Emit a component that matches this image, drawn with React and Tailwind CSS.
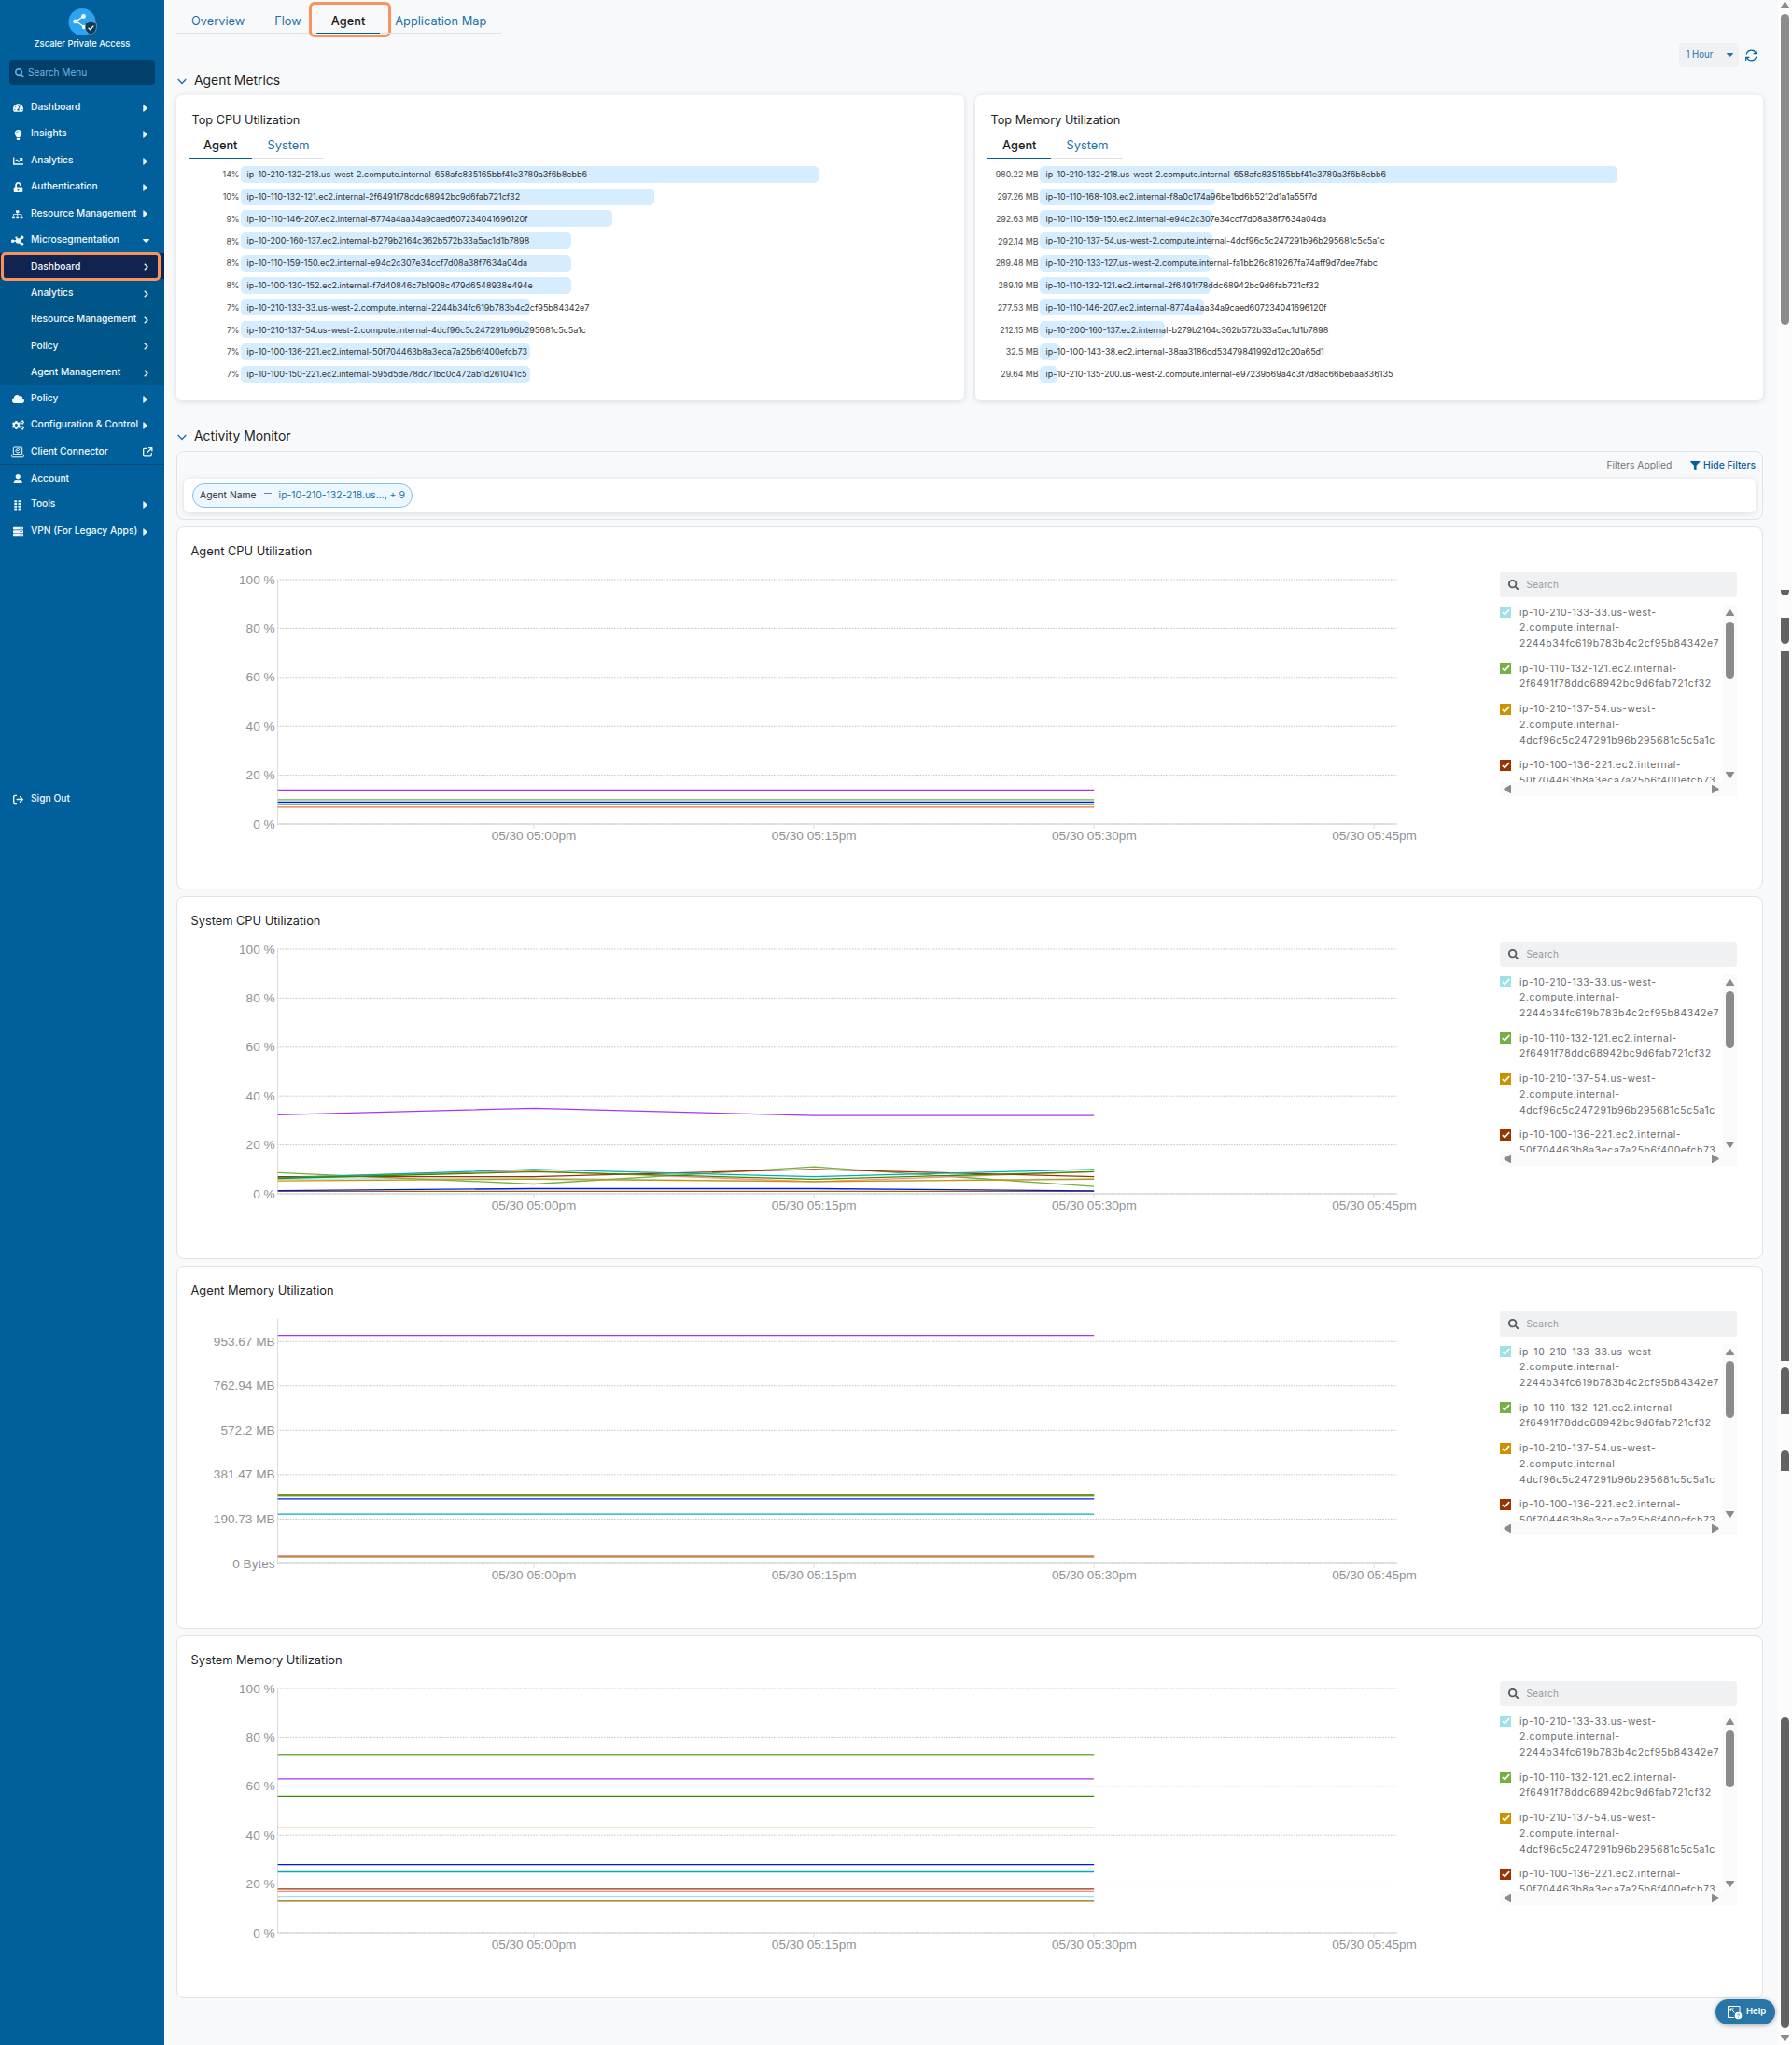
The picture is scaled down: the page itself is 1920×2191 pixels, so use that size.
import { useState } from 'react'
import { FaTachometerAlt, FaLightbulb, FaChartLine, FaUnlockAlt, FaSitemap, FaCloud, FaCogs, FaUser, FaServer, FaSearch, FaFilter } from 'react-icons/fa'
import { FaArrowRightFromBracket, FaArrowUpRightFromSquare } from 'react-icons/fa6'


const cpuAgents = [
  { label: '14%', value: 14, name: 'ip-10-210-132-218.us-west-2.compute.internal-658afc835165bbf41e3789a3f6b8ebb6' },
  { label: '10%', value: 10, name: 'ip-10-110-132-121.ec2.internal-2f6491f78ddc68942bc9d6fab721cf32' },
  { label: '9%', value: 9, name: 'ip-10-110-146-207.ec2.internal-8774a4aa34a9caed607234041696120f' },
  { label: '8%', value: 8, name: 'ip-10-200-160-137.ec2.internal-b279b2164c362b572b33a5ac1d1b7898' },
  { label: '8%', value: 8, name: 'ip-10-110-159-150.ec2.internal-e94c2c307e34ccf7d08a38f7634a04da' },
  { label: '8%', value: 8, name: 'ip-10-100-130-152.ec2.internal-f7d40846c7b1908c479d6548938e494e' },
  { label: '7%', value: 7, name: 'ip-10-210-133-33.us-west-2.compute.internal-2244b34fc619b783b4c2cf95b84342e7' },
  { label: '7%', value: 7, name: 'ip-10-210-137-54.us-west-2.compute.internal-4dcf96c5c247291b96b295681c5c5a1c' },
  { label: '7%', value: 7, name: 'ip-10-100-136-221.ec2.internal-50f704463b8a3eca7a25b6f400efcb73' },
  { label: '7%', value: 7, name: 'ip-10-100-150-221.ec2.internal-595d5de78dc71bc0c472ab1d261041c5' },
]

const memoryAgents = [
  { label: '980.22 MB', value: 980.22, name: 'ip-10-210-132-218.us-west-2.compute.internal-658afc835165bbf41e3789a3f6b8ebb6' },
  { label: '297.26 MB', value: 297.26, name: 'ip-10-110-168-108.ec2.internal-f8a0c174a96be1bd6b5212d1a1a55f7d' },
  { label: '292.63 MB', value: 292.63, name: 'ip-10-110-159-150.ec2.internal-e94c2c307e34ccf7d08a38f7634a04da' },
  { label: '292.14 MB', value: 292.14, name: 'ip-10-210-137-54.us-west-2.compute.internal-4dcf96c5c247291b96b295681c5c5a1c' },
  { label: '289.48 MB', value: 289.48, name: 'ip-10-210-133-127.us-west-2.compute.internal-fa1bb26c819267fa74aff9d7dee7fabc' },
  { label: '289.19 MB', value: 289.19, name: 'ip-10-110-132-121.ec2.internal-2f6491f78ddc68942bc9d6fab721cf32' },
  { label: '277.53 MB', value: 277.53, name: 'ip-10-110-146-207.ec2.internal-8774a4aa34a9caed607234041696120f' },
  { label: '212.15 MB', value: 212.15, name: 'ip-10-200-160-137.ec2.internal-b279b2164c362b572b33a5ac1d1b7898' },
  { label: '32.5 MB', value: 32.5, name: 'ip-10-100-143-38.ec2.internal-38aa3186cd53479841992d12c20a65d1' },
  { label: '29.64 MB', value: 29.64, name: 'ip-10-210-135-200.us-west-2.compute.internal-e97239b69a4c3f7d8ac66bebaa836135' },
]

const legend = [
  { color: '#a0e1e8', lines: ['ip-10-210-133-33.us-west-', '2.compute.internal-', '2244b34fc619b783b4c2cf95b84342e7'] },
  { color: '#74b043', lines: ['ip-10-110-132-121.ec2.internal-', '2f6491f78ddc68942bc9d6fab721cf32'] },
  { color: '#cc9200', lines: ['ip-10-210-137-54.us-west-', '2.compute.internal-', '4dcf96c5c247291b96b295681c5c5a1c'] },
  { color: '#993300', lines: ['ip-10-100-136-221.ec2.internal-', '50f704463b8a3eca7a25b6f400efcb73'] },
]

const percentTicks = [100, 80, 60, 40, 20, 0].map(v => ({ value: v, label: v + ' %' }))
const memoryTicks = ['953.67 MB', '762.94 MB', '572.2 MB', '381.47 MB', '190.73 MB', '0 Bytes'].map((label, i) => ({ value: (5 - i) * 190.735, label }))
const flat = v => [v, v, v, v]

const charts = [
  {
    title: 'Agent CPU Utilization', ticks: percentTicks, max: 100,
    series: [
      { color: '#a0e1e8', data: flat(8.4) },
      { color: '#74b043', data: flat(10) },
      { color: '#0018f0', data: flat(9) },
      { color: '#7f7a10', data: flat(8) },
      { color: '#993300', data: flat(7) },
      { color: '#ff8c80', data: flat(7) },
      { color: '#a933ff', data: flat(14) },
    ]
  },
  {
    title: 'System CPU Utilization', ticks: percentTicks, max: 100,
    series: [
      { color: '#a0e1e8', data: [6, 6.4, 5, 6.2] },
      { color: '#74b043', data: [8.6, 4, 11, 3] },
      { color: '#ff8c80', data: [6.8, 9.3, 5, 9] },
      { color: '#993300', data: [7, 7, 10, 7] },
      { color: '#cc9200', data: [5.3, 6, 5, 6] },
      { color: '#00adb5', data: [6.5, 10, 7, 10] },
      { color: '#3c8a00', data: [6.3, 9, 6, 9] },
      { color: '#996600', data: flat(1) },
      { color: '#0018f0', data: [1.3, 2.1, 2.1, 1.2] },
      { color: '#a933ff', data: [32.3, 35, 32, 32] },
    ]
  },
  {
    title: 'Agent Memory Utilization', ticks: memoryTicks, max: 1051,
    series: [
      { color: '#74b043', data: flat(289.19) },
      { color: '#cc9200', data: flat(292.14) },
      { color: '#3c8a00', data: flat(293) },
      { color: '#0018f0', data: flat(277.53) },
      { color: '#00adb5', data: flat(212.15) },
      { color: '#e59a90', data: flat(33) },
      { color: '#b06a10', data: flat(28.5) },
      { color: '#a933ff', data: flat(980.22) },
    ]
  },
  {
    title: 'System Memory Utilization', ticks: percentTicks, max: 100,
    series: [
      { color: '#74b043', data: flat(73) },
      { color: '#a933ff', data: flat(63) },
      { color: '#3c8a00', data: flat(56) },
      { color: '#cc9200', data: flat(43) },
      { color: '#0018f0', data: flat(28) },
      { color: '#00adb5', data: flat(25) },
      { color: '#993300', data: flat(18) },
      { color: '#ff8c80', data: flat(17) },
      { color: '#a0e1e8', data: flat(15) },
      { color: '#996600', data: flat(13) },
    ]
  },
]

function NodesIcon() {
  return (
    <svg width="14" height="12" viewBox="0 0 14 12" fill="currentColor" stroke="currentColor" strokeWidth="1.3">
      <path d="M2 6h4.5M7 6l4-3.4M7 6l4 3.6M5.8 3.2L7.5 6" fill="none" />
      <circle cx="1.7" cy="6.2" r="1.1" />
      <circle cx="7.4" cy="6" r="2" />
      <circle cx="11.6" cy="2.3" r="1.2" />
      <circle cx="11.6" cy="9.7" r="1.2" />
      <circle cx="5.4" cy="2.6" r=".5" />
    </svg>
  )
}

function LaptopIcon() {
  return (
    <svg width="14" height="13" viewBox="0 0 14 13" fill="none" stroke="currentColor" strokeWidth="1">
      <rect x="2.3" y="1" width="9.4" height="7.6" rx=".8" />
      <path d="M.7 9.2h12.6v1.9c0 .4-.3.7-.7.7H1.4c-.4 0-.7-.3-.7-.7z" />
      <path d="M9 3.6a2.2 2.2 0 1 0 .2 2M9.3 2.8l-2.2 2.2-1-.9" />
    </svg>
  )
}

function DotsIcon() {
  return (
    <svg width="8" height="11" viewBox="0 0 8 11" fill="currentColor">
      {[0.3, 3.05, 5.8, 8.55].map(y => [0.3, 4.5].map(x => <rect key={x + '-' + y} x={x} y={y} width="2.8" height="2" rx=".5" />))}
    </svg>
  )
}

const menu = [
  { name: 'Dashboard', icon: <FaTachometerAlt size={11} />, arrow: 'right' },
  { name: 'Insights', icon: <FaLightbulb size={11} />, arrow: 'right' },
  { name: 'Analytics', icon: <FaChartLine size={11} />, arrow: 'right' },
  { name: 'Authentication', icon: <FaUnlockAlt size={11} />, arrow: 'right' },
  { name: 'Resource Management', icon: <FaSitemap size={11.5} />, arrow: 'right' },
  { name: 'Microsegmentation', icon: <NodesIcon />, arrow: 'down' },
]
const subMenu = ['Dashboard', 'Analytics', 'Resource Management', 'Policy', 'Agent Management']
const menuAfter = [
  { name: 'Policy', icon: <FaCloud size={13} />, arrow: 'right', divider: true },
  { name: 'Configuration & Control', icon: <FaCogs size={13} />, arrow: 'right' },
  { name: 'Client Connector', icon: <LaptopIcon />, arrow: 'external' },
  { name: 'Account', icon: <FaUser size={10.5} />, divider: true },
  { name: 'Tools', icon: <DotsIcon />, arrow: 'right' },
  { name: 'VPN (For Legacy Apps)', icon: <FaServer size={11} />, arrow: 'right' },
]

function Arrow({ type }) {
  if (type === 'right') return <svg width="5" height="8" viewBox="0 0 5 8" fill="currentColor"><path d="M.3.8C.3.3.8.1 1.2.4L4.6 3.5c.3.3.3.7 0 1L1.2 7.6C.8 7.9.3 7.7.3 7.200z" /></svg>
  if (type === 'down') return <svg width="7" height="4" viewBox="0 0 7 4" fill="currentColor"><path d="M.7.1h5.6c.5 0 .7.5.4.8L3.9 3.7c-.2.2-.6.2-.8 0L.3.9C0 .6.2.1.7.1z" /></svg>
  if (type === 'external') return <FaArrowUpRightFromSquare size={10.5} />
  if (type === 'chevron') return <svg width="5" height="8" viewBox="0 0 5 8" fill="none" stroke="currentColor" strokeWidth="1.4"><path d="M.8.8L4 4 .8 7.2" /></svg>
  return null
}

function MenuItem({ item }) {
  return (
    <div className={'flex h-[28.43px] items-center text-[10.25px] font-medium whitespace-nowrap' + (item.divider ? ' border-t border-[#0b4770]' : '')}>
      <span className="flex w-[14px] justify-center ml-3 mt-0.5">{item.icon}</span>
      <span className="ml-[7px] w-[120px]">{item.name}</span>
      <span className="mt-0.5"><Arrow type={item.arrow} /></span>
    </div>
  )
}

function Sidebar() {
  return (
    <aside className="w-[176px] shrink-0 bg-[#01609b] text-[#f2f8fc]">
      <div className="flex h-16 flex-col items-center pt-2">
        <svg width="31" height="31" viewBox="0 0 31 31">
          <circle cx="15" cy="15.5" r="14.5" fill="#2ba5f0" />
          <path d="M16.5 9.5L8.5 14.8l8.5 6" stroke="#fff" strokeWidth="1.2" fill="none" />
          <circle cx="16.5" cy="9.5" r="2.4" fill="#fff" />
          <circle cx="7.6" cy="15" r="2.4" fill="#fff" />
          <circle cx="17" cy="21" r="2.2" fill="#fff" />
          <path d="M24.3 14.9l6 2.2v4.4c0 3.6-2.4 6-6 7.8-3.6-1.8-6-4.2-6-7.8v-4.4z" fill="#0c3a5c" stroke="#7c97ab" strokeWidth=".9" />
          <path d="M21.6 21.8l2 2 3.7-4.2" stroke="#fff" strokeWidth="1.3" fill="none" />
        </svg>
        <div className="mt-px text-[9.4px] leading-[14px] font-medium">Zscaler Private Access</div>
      </div>
      <div className="mx-[10px] flex h-[27px] items-center gap-1 rounded bg-[#024069] pl-1.5 text-[10.1px] text-[#6cb4e8]">
        <FaSearch size={10} />
        <span>Search Menu</span>
      </div>
      <nav className="pt-[9.5px]">
        {menu.map(item => <MenuItem key={item.name} item={item} />)}
        <div className="h-[141.2px] bg-[#005589]">
          {subMenu.map((name, i) => (
            <div key={name} className={'relative flex h-[28.4px] items-center pl-[33px] text-[10.25px] font-medium whitespace-nowrap' + (i === 0 ? ' bg-[#10244f]' : '')}>
              <span className="w-[120.5px]">{name}</span>
              <span className="mt-0.5"><Arrow type="chevron" /></span>
              {i === 0 && <span className="absolute -top-px left-px h-[31px] w-[171px] rounded-[5px] border-3 border-[#f7935c]"></span>}
            </div>
          ))}
        </div>
        {menuAfter.map(item => <MenuItem key={item.name} item={item} />)}
        <div className="pt-[259px]">
          <MenuItem item={{ name: 'Sign Out', icon: <FaArrowRightFromBracket size={11} /> }} />
        </div>
      </nav>
    </aside>
  )
}

function Tabs({ items, active, onSelect, boxed }) {
  return (
    <div className="flex text-[12.8px] text-[#1c72a6]">
      {items.map(name => (
        <button
          key={name}
          onClick={() => onSelect(name)}
          className={'relative flex h-[27px] items-center border-b px-4 whitespace-nowrap ' + (boxed ? 'pt-px ' : '') + (name === active ? 'border-[#01609b] font-medium text-[#1a1a1c]' : 'border-[#e0e1e3]')}
        >
          {name}
          {boxed && name === active && <span className="absolute -top-[7px] -left-2 h-[38px] w-[88px] rounded-md border-3 border-[#f7935c]"></span>}
        </button>
      ))}
    </div>
  )
}

function SectionTitle({ children }) {
  return (
    <div className="flex h-[30px] items-center pb-px pl-px text-[13.9px] text-[#1f1f21]">
      <svg className="mr-2 mt-0.5" width="10" height="7" viewBox="0 0 10 7" fill="none" stroke="#1c72a6" strokeWidth="1.3"><path d="M.7 1L5 5.5 9.3 1" /></svg>
      {children}
    </div>
  )
}

function TopCard({ title, rows }) {
  const [tab, setTab] = useState('Agent')
  const max = rows[0].value
  return (
    <div className="h-[327px] rounded-md bg-white pt-[17px] shadow-[0_1px_6px_rgba(0,0,0,0.13)]">
      <div className="pl-[16.5px] text-[12.7px] leading-5 text-[#232325]">{title}</div>
      <div className="mt-1 flex pl-[13px]">
        <Tabs items={['Agent', 'System']} active={tab} onSelect={setTab} />
      </div>
      <div className="mt-[5px] text-[8.99px] text-[#333]">
        {rows.map(row => (
          <div key={row.name} className="flex h-[23.78px] items-center whitespace-nowrap">
            <span className="w-[67.5px] text-right text-[8.8px] text-[#4a4a4a]">{row.label}</span>
            <div className="ml-[1.7px] flex h-[18px] items-center rounded-[5px] bg-[#d5edff] pl-[6.4px]" style={{ width: row.value / max * 619.3 }}>{row.name}</div>
          </div>
        ))}
      </div>
    </div>
  )
}

function LineChart({ ticks, max, series }) {
  const top = 12
  const bottom = 274
  const xs = [107.7, 381.9, 682.1, 982.2]
  const y = v => bottom - v / max * (bottom - top)
  return (
    <svg width="1417" height="300" viewBox="0 0 1417 300" fontFamily="'Liberation Sans', Arial, sans-serif" fontSize="13.6" fill="#929292">
      {ticks.map(t => (
        <g key={t.label}>
          <line x1="107" x2="1306.5" y1={y(t.value)} y2={y(t.value)} stroke={t.value === 0 ? '#b5b5b5' : '#c6c6c6'} strokeWidth="1" strokeDasharray="1.6 1.2" />
          <text x="104.6" y={y(t.value) + 4.5} textAnchor="end">{t.label}</text>
        </g>
      ))}
      <line x1="107" x2="1306.5" y1={bottom} y2={bottom} stroke="#d6d6d6" strokeWidth="1" />
      <line x1="107.5" x2="107.5" y1={top} y2={bottom} stroke="#dcdcdc" />
      {['05/30 05:00pm', '05/30 05:15pm', '05/30 05:30pm', '05/30 05:45pm'].map((t, i) => (
        <g key={t}>
          <line x1={381.9 + i * 300.1} x2={381.9 + i * 300.1} y1={bottom} y2={bottom + 5} stroke="#dcdcdc" />
          <text x={382 + i * 300.2} y="290.6" textAnchor="middle">{t}</text>
        </g>
      ))}
      {series.map((s, i) => (
        <polyline key={i} points={s.data.map((v, j) => xs[j] + ',' + y(v)).join(' ')} fill="none" stroke={s.color} strokeWidth="1.3" />
      ))}
    </svg>
  )
}

function Legend() {
  return (
    <div className="mt-1 w-[254px]">
      <div className="flex h-[27px] items-center rounded-[3px] bg-[#f0f1f3] pl-[9px] text-[10.1px] tracking-[0.2px] text-[#9b9b9b]">
        <FaSearch size={11.5} className="mr-2 text-[#5c5c5c]" />
        Search
      </div>
      <div className="mt-2 flex h-[190px]">
        <div className="w-[239px] overflow-hidden pt-[0.7px] text-[10.4px] leading-[16.64px] tracking-[0.57px] whitespace-nowrap text-[#68686a]">
          {legend.map(item => (
            <div key={item.color} className="mb-[10.2px] flex">
              <span className="mt-[1.5px] mr-[9px] flex size-3 shrink-0 items-center justify-center" style={{ background: item.color }}>
                <svg width="9" height="8" viewBox="0 0 9 8" fill="none" stroke="#fff" strokeWidth="1.7"><path d="M.8 4.2L3.2 6.5 8.2 1.2" /></svg>
              </span>
              <span>{item.lines.map(l => <span key={l} className="block">{l}</span>)}</span>
            </div>
          ))}
        </div>
        <div className="flex w-[15px] flex-col items-center bg-[#fafafa] pt-[5px] text-[#8b8b8b]">
          <svg width="9" height="7" viewBox="0 0 9 7" fill="currentColor"><path d="M3.7.5h1.6L9 6.2V7H0v-.8z" /></svg>
          <div className="mt-1.5 h-[61px] w-[9px] rounded-full bg-[#8b8b8b]"></div>
          <svg className="mt-auto mb-1" width="9" height="7" viewBox="0 0 9 7" fill="currentColor"><path d="M3.7 6.5h1.6L9 .8V0H0v.8z" /></svg>
        </div>
      </div>
      <div className="flex h-[15px] items-center justify-between bg-[#fafafa] pr-[19px] pl-1 text-[#8b8b8b]">
        <svg width="8" height="9" viewBox="0 0 8 9" fill="currentColor"><path d="M.5 3.7v1.6L7.2 9H8V0h-.8z" /></svg>
        <svg width="8" height="9" viewBox="0 0 8 9" fill="currentColor"><path d="M7.5 3.7v1.6L.8 9H0V0h.8z" /></svg>
      </div>
    </div>
  )
}

function ChartCard({ chart }) {
  return (
    <div className="h-[388.8px] rounded-lg border border-[#e0e2e5] bg-white">
      <div className="flex h-11 items-center pt-[7px] pl-[14.5px] text-[12.8px] text-[#232325]">{chart.title}</div>
      <div className="flex">
        <LineChart ticks={chart.ticks} max={chart.max} series={chart.series} />
        <Legend />
      </div>
    </div>
  )
}

function PageScrollbar() {
  return (
    <div className="flex w-[15px] flex-col items-center bg-[#fcfcfc] pt-[2px]">
      <svg width="9" height="7" viewBox="0 0 9 7" fill="#8b8b8b"><path d="M3.7.3h1.6L9 6.2V7H0v-.8z" /></svg>
      <div className="mt-1.5 h-[333px] w-[9px] rounded-full bg-[#8b8b8b]"></div>
      <div className="mt-[284px] h-[6px] w-[9px] rounded-b-full bg-[#626262]"></div>
      <div className="mt-6 h-[28px] w-[9px] rounded-b-full bg-[#626262]"></div>
      <div className="mt-[7px] h-[761px] w-[9px] bg-[#626262]"></div>
      <div className="mt-[7px] h-[50px] w-[9px] rounded-t-full bg-[#626262]"></div>
      <div className="mt-[39px] h-[22px] w-[9px] rounded-t-full bg-[#626262]"></div>
      <div className="mt-[264px] h-[333px] w-[9px] rounded-full bg-[#626262]"></div>
      <svg className="mt-[7px]" width="9" height="7" viewBox="0 0 9 7" fill="#8b8b8b"><path d="M3.7 6.7h1.6L9 .8V0H0v.8z" /></svg>
    </div>
  )
}

function App() {
  const [page, setPage] = useState('Agent')

  return (
    <div className="relative flex h-[2191px] w-[1920px] overflow-hidden bg-[#f8f9fb] font-['Inter',sans-serif]">
      <Sidebar />
      <main className="flex-1 pr-4 pl-[13px]">
        <div className="pt-[9px]">
          <Tabs items={['Overview', 'Flow', 'Agent', 'Application Map']} active={page} onSelect={setPage} boxed />
        </div>
        <div className="mt-[10px] flex items-center justify-end gap-[7px] pr-1.5 text-[#1c72a6]">
          <div className="flex h-[26px] w-16 items-center justify-between rounded-[3px] bg-[#f0f1f3] pr-1.5 pl-[7.5px] text-[9.65px]">
            1 Hour
            <Arrow type="down" />
          </div>
          <svg width="13" height="13" viewBox="0 0 13 13" fill="none" stroke="#01609b" strokeWidth="1.2">
            <path d="M1.3 5.4a5.3 5.3 0 0 1 10-1.2M12.3.9v3.7H8.6M11.7 7.6a5.3 5.3 0 0 1-10 1.2M.7 12.1V8.4h3.7" />
          </svg>
        </div>
        <SectionTitle>Agent Metrics</SectionTitle>
        <div className="grid grid-cols-2 gap-3">
          <TopCard title="Top CPU Utilization" rows={cpuAgents} />
          <TopCard title="Top Memory Utilization" rows={memoryAgents} />
        </div>
        <div className="pt-6">
          <SectionTitle>Activity Monitor</SectionTitle>
        </div>
        <div className="h-[74px] rounded-lg border border-[#e0e2e5] px-[7px]">
          <div className="flex h-[29px] items-center justify-end pt-px text-[10.35px] text-[#757577]">
            Filters Applied
            <span className="ml-5 flex items-center gap-[3px] font-medium text-[#01609b]"><FaFilter size={10.5} />Hide Filters</span>
          </div>
          <div className="flex h-9 items-center rounded-[5px] bg-white pl-[9px] shadow-[0_1px_6px_rgba(0,0,0,0.12)]">
            <div className="flex h-[26px] items-center rounded-full border border-[#7fbff0] bg-[#edf7ff] px-[7px] text-[10.35px] text-[#2d2d2f]">
              Agent Name
              <svg className="mx-2" width="8" height="6" viewBox="0 0 8 6" stroke="#7c7c7c" strokeWidth="1"><path d="M0 .5h8M0 4.5h8" /></svg>
              <span className="text-[10.45px] text-[#1c72a6]">ip-10-210-132-218.us..., + 9</span>
            </div>
          </div>
        </div>
        <div className="mt-[7px] flex flex-col gap-[7.2px]">
          {charts.map(chart => <ChartCard key={chart.title} chart={chart} />)}
        </div>
      </main>
      <PageScrollbar />
      <button className="absolute top-[2142px] left-[1838px] flex h-[27px] w-16 items-center rounded-full bg-[#2876a8] pl-3 text-[9.5px] font-semibold text-white shadow-[0_1px_5px_rgba(0,0,0,0.35)]">
        <svg className="mr-1 mt-px" width="17" height="16" viewBox="0 0 17 16" fill="none" stroke="#fff" strokeWidth="1">
          <path d="M8 13.5H1.5V1.5h12.5V8" />
          <path d="M8.5 8.5L4 4M4 7V4h3.5" />
          <circle cx="12.5" cy="11.5" r="3.8" fill="#fff" stroke="none" />
          <path d="M11.5 10.8c0-1.4 2.2-1.3 2.2 0 0 .7-1.1.7-1.1 1.5M12.6 13v.7" stroke="#2876a8" strokeWidth=".8" />
        </svg>
        Help
      </button>
    </div>
  )
}

export default App
